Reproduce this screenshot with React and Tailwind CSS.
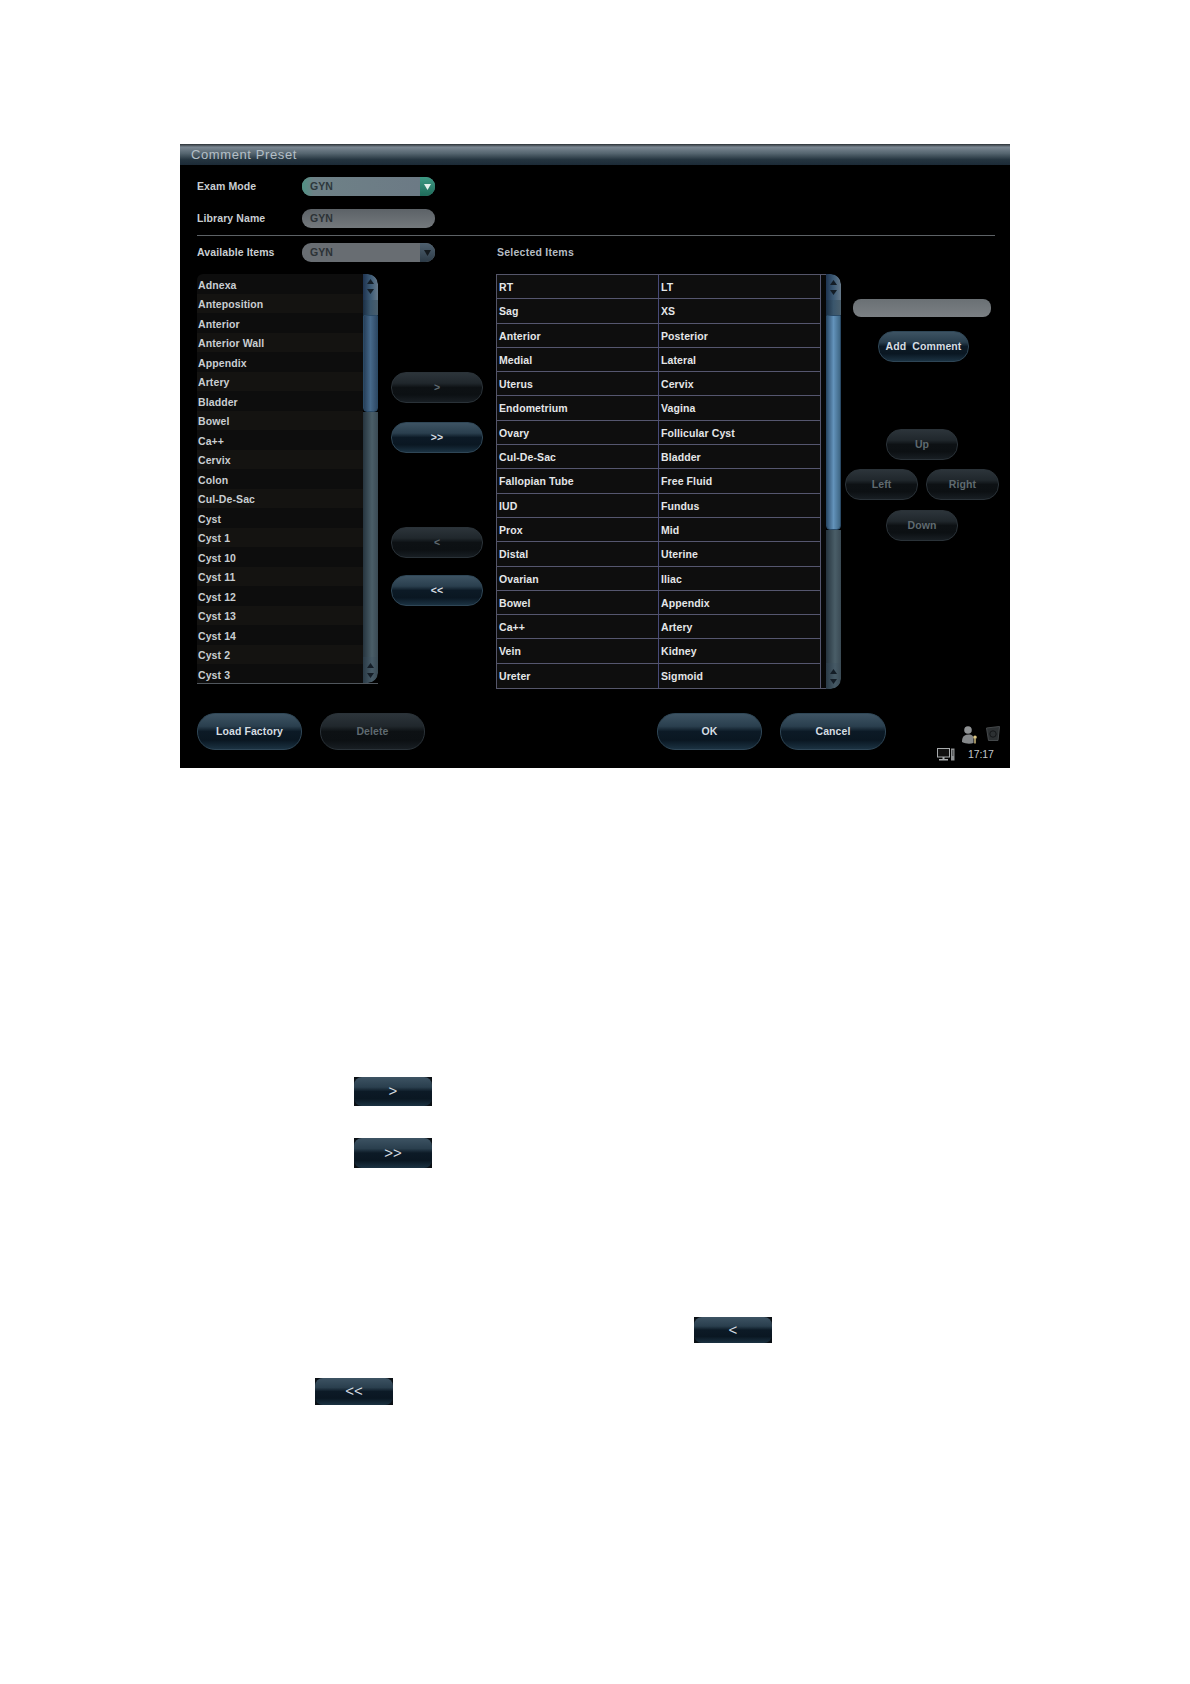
// App.jsx
const availableItems = [
  'Adnexa', 'Anteposition', 'Anterior', 'Anterior Wall', 'Appendix', 'Artery', 'Bladder',
  'Bowel', 'Ca++', 'Cervix', 'Colon', 'Cul-De-Sac', 'Cyst', 'Cyst 1', 'Cyst 10', 'Cyst 11',
  'Cyst 12', 'Cyst 13', 'Cyst 14', 'Cyst 2', 'Cyst 3',
];

const selectedItems = [
  ['RT', 'LT'], ['Sag', 'XS'], ['Anterior', 'Posterior'], ['Medial', 'Lateral'],
  ['Uterus', 'Cervix'], ['Endometrium', 'Vagina'], ['Ovary', 'Follicular Cyst'],
  ['Cul-De-Sac', 'Bladder'], ['Fallopian Tube', 'Free Fluid'], ['IUD', 'Fundus'],
  ['Prox', 'Mid'], ['Distal', 'Uterine'], ['Ovarian', 'Iliac'], ['Bowel', 'Appendix'],
  ['Ca++', 'Artery'], ['Vein', 'Kidney'], ['Ureter', 'Sigmoid'],
];

const activeBtn = 'border-[#2f4656] bg-[linear-gradient(180deg,#3d5363_0%,#2a3f4e_35%,#0c1a26_50%,#0a1722_75%,#1b3242_100%)] text-[#d5dde2]';
const disabledBtn = 'border-[#2a3238] bg-[linear-gradient(180deg,#2c343a_0%,#20272c_35%,#0d1114_50%,#0c1013_75%,#181e23_100%)] text-[#5f6a70]';

const Btn = ({ label, disabled, className }) => (
  <div className={`flex items-center justify-center rounded-[15px] border ${disabled ? disabledBtn : activeBtn} ${className}`}>
    {label}
  </div>
);

const ScrollArrows = ({ className }) => (
  <div className={`flex h-[26px] flex-col items-center justify-center gap-[5px] ${className}`}>
    <svg width="7" height="5" viewBox="0 0 7 5"><path d="M3.5 0L7 5H0z" fill="#141d26" /></svg>
    <svg width="7" height="5" viewBox="0 0 7 5"><path d="M0 0h7L3.5 5z" fill="#141d26" /></svg>
  </div>
);

const Scrollbar = ({ thumb, rest }) => (
  <div className="flex h-full w-[15px] flex-col overflow-hidden rounded-r-[10px]">
    <ScrollArrows className="rounded-tr-[10px] bg-[linear-gradient(90deg,#1e3350,#3c5a75_50%,#66798a)]" />
    <div className="h-[15px] bg-[linear-gradient(90deg,#1a2f45,#3a566c_50%,#4a5f6d)]" />
    <div className={`rounded-b-[4px] border border-[#2a4a66] ${thumb}`} />
    <div className={`bg-[linear-gradient(90deg,#26343e,#4a5e68_60%,#3a4a54)] ${rest}`} />
    <ScrollArrows className="rounded-br-[10px] bg-[linear-gradient(90deg,#2a3a46,#465a66_60%,#3a4a54)]" />
  </div>
);

const App = () => {
  return (
    <div className="h-[1684px] w-[1190px] overflow-hidden bg-white pt-[144px] font-['Liberation_Sans',Arial,sans-serif] text-[10.5px] font-bold tracking-[0.1px]">
      <div className="ml-[180px] h-[624px] w-[830px] bg-black text-[#c9ced2]">
        <div className="flex h-[21px] items-center bg-[linear-gradient(180deg,#2a3035_0%,#7a8792_15%,#55656f_45%,#24343f_75%,#1c2a36_100%)] pl-[11px] text-[13px] font-normal tracking-[0.6px] text-[#b4bfc6]">
          Comment Preset
        </div>

        <div className="mt-[12px] flex h-[19px] items-center pl-[17px]">
          <span className="w-[105px]">Exam Mode</span>
          <div className="flex h-[19px] w-[133px] items-center overflow-hidden rounded-[9px] bg-[#5d7f80]">
            <div className="h-full flex-1 bg-[linear-gradient(90deg,#4f9284_0%,#6e8187_10%,#6c7a85_100%)] pl-[8px] leading-[19px] text-[#2d383c]">GYN</div>
            <div className="flex h-full w-[15px] items-center justify-center bg-[linear-gradient(180deg,#3f9a85,#1f6b5a)]">
              <svg width="7" height="6" viewBox="0 0 7 6"><path d="M0 0h7L3.5 6z" fill="#e4f0ec" /></svg>
            </div>
          </div>
        </div>

        <div className="mt-[13px] flex h-[19px] items-center pl-[17px]">
          <span className="w-[105px]">Library Name</span>
          <div className="h-[19px] w-[133px] rounded-[9px] bg-[linear-gradient(180deg,#5c6267,#74797d)] pl-[8px] leading-[19px] text-[#2c3236]">GYN</div>
        </div>

        <div className="ml-[17px] mt-[7px] h-px w-[798px] bg-[#5d6266]" />

        <div className="mt-[7px] flex h-[19px] items-center pl-[17px]">
          <span className="w-[105px]">Available Items</span>
          <div className="flex h-[19px] w-[133px] items-center overflow-hidden rounded-[9px] bg-[#686d72]">
            <div className="h-full flex-1 pl-[8px] leading-[19px] text-[#2c3236]">GYN</div>
            <div className="flex h-full w-[15px] items-center justify-center bg-[linear-gradient(180deg,#4f6170,#2c3a46)]">
              <svg width="7" height="6" viewBox="0 0 7 6"><path d="M0 0h7L3.5 6z" fill="#141a1f" /></svg>
            </div>
          </div>
          <span className="ml-[62px] tracking-[0.25px] text-[#b5bcc2]">Selected Items</span>
        </div>

        <div className="mt-[12px] flex h-[415px] items-start pl-[17px]">
          {/* lista da esquerda */}
          <div className="flex h-[410px] w-[181px] overflow-hidden rounded-tl-[6px] border-b border-[#50565c]">
            <div className="w-[166px]">
              {availableItems.map((item, i) => (
                <div key={item} className={`h-[19.5px] pl-px pt-[1.5px] leading-[18px] ${i % 2 ? 'bg-[#141311]' : 'bg-[#0d0d0d]'}`}>{item}</div>
              ))}
            </div>
            <Scrollbar thumb="h-[97px] bg-[linear-gradient(90deg,#27405a,#46698a_50%,#2f4a66)]" rest="h-[246px]" />
          </div>

          <div className="ml-[13px] w-[92px] text-[#cdd5da]">
            <Btn label=">" disabled className="mt-[98px] h-[31px] text-[#5f6a70]" />
            <Btn label=">>" className="mt-[19px] h-[31px]" />
            <Btn label="<" disabled className="mt-[74px] h-[31px]" />
            <Btn label="<<" className="mt-[17px] h-[31px]" />
          </div>

          {/* tabela de selecionados */}
          <div className="ml-[13px] h-[415px] w-[330px] border-y border-l border-[#55566a] bg-[#070707]">
            {selectedItems.map(([left, right], i) => (
              <div key={left} className="flex h-[24.3px] text-[#e4e6e8]">
                <div className={`flex flex-1 bg-[#0e0e0e] ${i < selectedItems.length - 1 ? 'border-b border-[#55566f]' : ''}`}>
                  <div className="w-[162px] border-r border-[#474a78] pl-[2px] leading-[24px]">{left}</div>
                  <div className="flex-1 border-r border-[#55566f] pl-[2px] leading-[24px]">{right}</div>
                </div>
                <div className="w-[5px]" />
              </div>
            ))}
          </div>
          <div className="h-[415px]">
            <Scrollbar thumb="h-[215px] bg-[linear-gradient(90deg,#2f4f6e,#6393bb_50%,#3f6785)]" rest="h-[133px]" />
          </div>

          <div className="relative ml-[4px] flex w-[154px] flex-col">
            <div className="ml-[8px] mt-[25px] h-[18px] w-[138px] rounded-[8px] bg-[linear-gradient(180deg,#6a7074,#7b8084)]" />
            <Btn label="Add  Comment" className="ml-[33px] mt-[14px] h-[31px] w-[91px] whitespace-pre" />
            <Btn label="Up" disabled className="ml-[41px] mt-[67px] h-[31px] w-[72px]" />
            <div className="mt-[9px] flex gap-[8px]">
              <Btn label="Left" disabled className="h-[31px] w-[73px]" />
              <Btn label="Right" disabled className="h-[31px] w-[73px]" />
            </div>
            <Btn label="Down" disabled className="ml-[41px] mt-[10px] h-[31px] w-[72px]" />
          </div>
        </div>

        <div className="mt-[24px] flex items-start pl-[17px]">
          <Btn label="Load Factory" className="h-[37px] w-[105px] !rounded-[18px]" />
          <Btn label="Delete" disabled className="ml-[18px] h-[37px] w-[105px] !rounded-[18px]" />
          <Btn label="OK" className="ml-[232px] h-[37px] w-[105px] !rounded-[18px]" />
          <Btn label="Cancel" className="ml-[18px] h-[37px] w-[106px] !rounded-[18px]" />
          <div className="ml-[51px] mt-[13px] w-[63px]">
            <div className="flex justify-end gap-[8px]">
              <svg width="16" height="18" viewBox="0 0 16 18">
                <circle cx="6" cy="4" r="3.8" fill="#8f9294" />
                <path d="M0 16c0-2 0-7.5 6.500-7.500 4 0 5 2 5 4.500v4c-3 1-8 1-11.500-1z" fill="#85888a" />
                <path d="M13 9.500a1.800 1.800 0 110 3.600 1.800 1.800 0 010-3.600zM12.300 13h1.400v4.500h-1.400z" fill="#dcc784" />
              </svg>
              <svg width="14" height="15" viewBox="0 0 14 15">
                <path d="M0.500 2L13.500 0.500L12 14.500H2.500z" fill="#2c3032" stroke="#45494b" />
                <circle cx="7" cy="8" r="3.200" fill="none" stroke="#141618" />
              </svg>
            </div>
            <div className="mt-[3px] flex items-center">
              <svg width="18" height="13" viewBox="0 0 18 13">
                <rect x="0.500" y="0.500" width="12" height="8.500" fill="#111" stroke="#a8abad" />
                <path d="M2 11h9v1.500H2zM5.500 9h2v2h-2z" fill="#a8abad" />
                <rect x="14" y="0.500" width="3.500" height="12" fill="#8f9294" />
                <path d="M15 3h1.500M15 5h1.500M15 7h1.500" stroke="#222" />
              </svg>
              <span className="ml-[13px] font-normal tracking-[-0.1px] text-[#c4c8cb]">17:17</span>
            </div>
          </div>
        </div>
      </div>

      {/* botoes soltos no texto */}
      <div className="ml-[354px] mt-[309px] h-[29px] w-[78px] bg-[#0a0f14] text-[15px] font-normal text-[#d8dfe4]">
        <Btn label=">" className="h-full !rounded-[8px] !border-0" />
      </div>
      <div className="ml-[354px] mt-[32px] h-[30px] w-[78px] bg-[#0a0f14] text-[15px] font-normal text-[#d8dfe4]">
        <Btn label=">>" className="h-full !rounded-[8px] !border-0" />
      </div>
      <div className="ml-[694px] mt-[149px] h-[26px] w-[78px] bg-[#0a0f14] text-[15px] font-normal text-[#d8dfe4]">
        <Btn label="<" className="h-full !rounded-[8px] !border-0" />
      </div>
      <div className="ml-[315px] mt-[35px] h-[27px] w-[78px] bg-[#0a0f14] text-[15px] font-normal text-[#d8dfe4]">
        <Btn label="<<" className="h-full !rounded-[8px] !border-0" />
      </div>
    </div>
  );
};

export default App;
